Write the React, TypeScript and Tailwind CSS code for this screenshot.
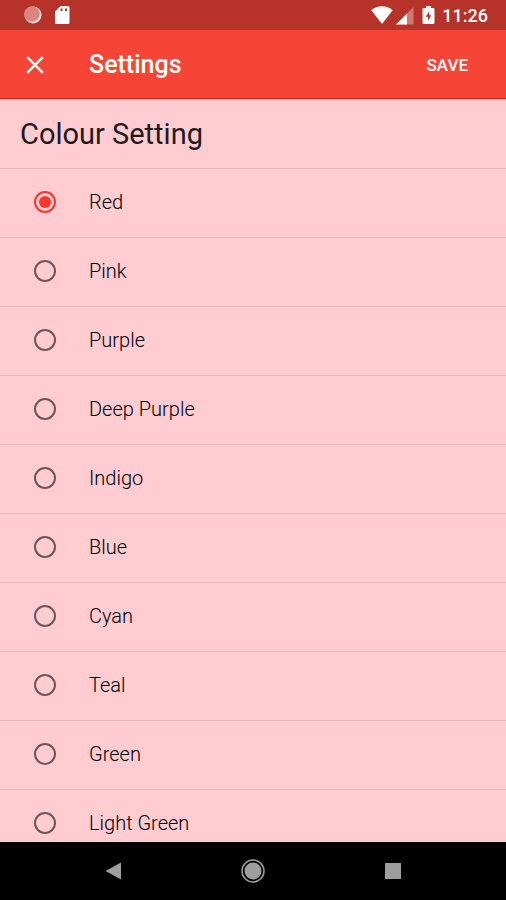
import { useState } from "react";

const COLOURS = [
  "Red",
  "Pink",
  "Purple",
  "Deep Purple",
  "Indigo",
  "Blue",
  "Cyan",
  "Teal",
  "Green",
  "Light Green",
];

const StatusBar = () => (
  <div className="flex h-[30px] shrink-0 items-center justify-between bg-[#b73229] pl-6 pr-[18px] text-white">
    <div className="flex items-center gap-3" aria-hidden>
      <svg width="18" height="18" viewBox="0 0 18 18">
        <circle cx="9" cy="9" r="8.500" fill="#fbe4e2" />
        <circle cx="8" cy="8" r="7.800" fill="#d98680" />
      </svg>
      <svg width="16" height="20" viewBox="0 0 16 20">
        <path
          d="M6.500 1H14a1.500 1.500 0 0 1 1.500 1.500v15A1.500 1.500 0 0 1 14 19H2.500A1.500 1.500 0 0 1 1 17.500V6.500z"
          fill="#fff"
        />
        <path d="M6.500 3.500h2v2.500h-2zM11 3.500h2v2.500h-2z" fill="#b73229" />
      </svg>
    </div>
    <div className="flex items-center">
      <svg width="22" height="20" viewBox="0 0 22 20" aria-hidden>
        <path d="M11 19 0.300 5.200C3.300 2.700 7 1.300 11 1.300s7.700 1.400 10.700 3.900z" fill="#fff" />
      </svg>
      <svg className="ml-[3px]" width="18" height="20" viewBox="0 0 18 20" aria-hidden>
        <path d="M0 19.500 17.500 2V19.500z" fill="#fff" fillOpacity=".35" />
        <path d="M0 19.500 11 8.500v11z" fill="#fff" />
      </svg>
      <svg className="ml-2" width="13" height="20" viewBox="0 0 13 20" aria-hidden>
        <path
          d="M4 1h5v2h2.500a1 1 0 0 1 1 1v14a1 1 0 0 1-1 1h-10a1 1 0 0 1-1-1V4a1 1 0 0 1 1-1H4z"
          fill="#fff"
        />
        <path d="M7.200 6 3.800 11.800h2.200V16L9.200 10.200H7.200z" fill="#b73229" />
      </svg>
      <span className="ml-[7px] pt-px text-lg leading-5 font-medium">11:26</span>
    </div>
  </div>
);

const AppBar = () => (
  <header className="flex h-[69px] shrink-0 items-center border-b border-[#e01b12] bg-[#f64536] pt-0.5 pr-[38px] pl-6 text-white">
    <button type="button" aria-label="Close" className="flex size-[22px] items-center justify-center">
      <svg width="22" height="22" viewBox="0 0 22 22" fill="none" aria-hidden>
        <path d="M3.200 3.200 18.800 18.800M18.800 3.200 3.200 18.800" stroke="#fff" strokeWidth="2.400" />
      </svg>
    </button>
    <h1 className="ml-[43px] flex-1 text-[25px] leading-8 font-medium">Settings</h1>
    <button type="button" className="text-[17px] leading-6 font-medium">
      SAVE
    </button>
  </header>
);

const NavBar = () => (
  <nav className="flex h-[58px] shrink-0 items-center justify-center gap-[116px] bg-black">
    <button type="button" aria-label="Back" className="flex size-6 items-center justify-center">
      <svg width="24" height="24" viewBox="0 0 24 24" aria-hidden>
        <path d="M20 3.500v17L4.500 12z" fill="#9e9e9e" />
      </svg>
    </button>
    <button type="button" aria-label="Home" className="flex size-6 items-center justify-center">
      <svg width="24" height="24" viewBox="0 0 24 24" aria-hidden>
        <circle cx="12" cy="12" r="11" fill="none" stroke="#9e9e9e" strokeWidth="1.500" />
        <circle cx="12" cy="12" r="8.500" fill="#9e9e9e" />
      </svg>
    </button>
    <button type="button" aria-label="Overview" className="flex size-6 items-center justify-center">
      <svg width="24" height="24" viewBox="0 0 24 24" aria-hidden>
        <rect x="4" y="4" width="16" height="16" rx="0.500" fill="#9e9e9e" />
      </svg>
    </button>
  </nav>
);

export default function App() {
  const [selected, setSelected] = useState("Red");

  return (
    <div className="flex h-dvh flex-col bg-[#ffccd2] font-[Roboto,sans-serif]">
      <StatusBar />
      <AppBar />
      <main className="min-h-0 flex-1 overflow-y-auto [scrollbar-width:none]">
        <h2
          id="colour-heading"
          className="flex h-[70px] items-center border-b border-[#dfbabe] px-5 text-[29px] leading-9 text-[#22191a]"
        >
          Colour Setting
        </h2>
        <div role="radiogroup" aria-labelledby="colour-heading">
          {COLOURS.map((colour) => (
            <label
              key={colour}
              className="flex h-[69px] items-center gap-[33px] border-b border-[#dfbabe] px-[34px] pb-0.5 text-xl font-light text-black"
            >
              <input
                type="radio"
                name="colour"
                value={colour}
                checked={selected === colour}
                onChange={() => setSelected(colour)}
                className="size-[22px] shrink-0 appearance-none rounded-full border-2 border-[#6b5658] bg-clip-content p-[3px] checked:border-[#f5382c] checked:bg-[#f5382c]"
              />
              {colour}
            </label>
          ))}
        </div>
      </main>
      <NavBar />
    </div>
  );
}
